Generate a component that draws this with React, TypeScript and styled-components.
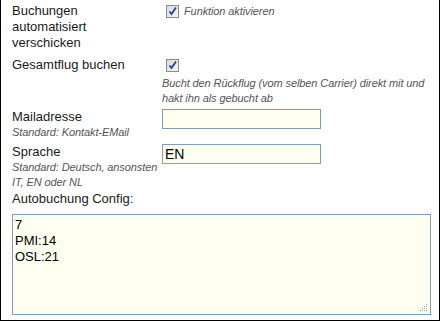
import React from "react";
import styled, { createGlobalStyle } from "styled-components";

const GlobalStyle = createGlobalStyle`
  html, body {
    margin: 0;
    padding: 0;
    background: #fff;
  }
  body {
    font-family: "Liberation Sans", Arial, sans-serif;
  }
`;

const Frame = styled.div`
  box-sizing: border-box;
  width: 440px;
  height: 321px;
  border: 1px solid #000;
  border-top: none;
  padding: 3px 8px 0 11px;
  background: #fff;
  overflow: hidden;
`;

const Row = styled.div<{ $gap?: number }>`
  display: grid;
  grid-template-columns: 150px 1fr;
  margin-bottom: ${(p) => p.$gap ?? 0}px;
`;

const Label = styled.div`
  font-size: 13px;
  line-height: 16px;
  color: #1a1a1a;
`;

const Hint = styled.div<{ $top?: number }>`
  font-size: 11px;
  line-height: 15px;
  font-style: italic;
  letter-spacing: -0.1px;
  color: #555;
  white-space: nowrap;
  margin-top: ${(p) => p.$top ?? 0}px;
`;

const Field = styled.div`
  display: flex;
  flex-direction: column;
`;

const CheckLine = styled.label`
  display: flex;
  align-items: center;
  gap: 5px;
  height: 16px;
  padding-left: 4px;
`;

const Box = styled.span`
  box-sizing: border-box;
  width: 13px;
  height: 13px;
  border: 1px solid #8c8c8c;
  background: linear-gradient(135deg, #d8d8d8, #f6f6f6);
  display: flex;
  align-items: center;
  justify-content: center;
`;

const Input = styled.input`
  box-sizing: border-box;
  width: 159px;
  height: 20px;
  margin: 0;
  padding: 0 2px;
  border: 1px solid #7f9db9;
  background: #fffff0;
  font-family: "Liberation Sans", Arial, sans-serif;
  font-size: 14px;
  color: #000;
  outline: none;
`;

const AreaWrap = styled.div`
  position: relative;
  width: 419px;
  height: 101px;
  margin-top: 7px;
`;

const Area = styled.textarea`
  box-sizing: border-box;
  width: 100%;
  height: 100%;
  margin: 0;
  padding: 2px 2px;
  border: 1px solid #7f9db9;
  background: #fffff0;
  font-family: "Liberation Sans", Arial, sans-serif;
  font-size: 13px;
  line-height: 16px;
  color: #000;
  resize: none;
  outline: none;
  display: block;
`;

const Grip = styled.svg`
  position: absolute;
  right: 3px;
  bottom: 3px;
`;

const Check = () => (
  <Box>
    <svg width="11" height="11" viewBox="0 0 11 11">
      <path d="M2.5 5.5 L4.5 8 L9 1.5" fill="none" stroke="#2a3ea0" strokeWidth="1.8" />
    </svg>
  </Box>
);

export default function App() {
  return (
    <>
      <GlobalStyle />
      <Frame>
        <Row $gap={6}>
          <Label>
            Buchungen
            <br />
            automatisiert
            <br />
            verschicken
          </Label>
          <Field>
            <CheckLine>
              <Check />
              <Hint>Funktion aktivieren</Hint>
            </CheckLine>
          </Field>
        </Row>
        <Row $gap={3}>
          <Label>Gesamtflug buchen</Label>
          <Field>
            <CheckLine>
              <Check />
            </CheckLine>
            <Hint $top={3}>
              Bucht den Rückflug (vom selben Carrier) direkt mit und
              <br />
              hakt ihn als gebucht ab
            </Hint>
          </Field>
        </Row>
        <Row $gap={4}>
          <Field>
            <Label>Mailadresse</Label>
            <Hint>Standard: Kontakt-EMail</Hint>
          </Field>
          <Field>
            <Input defaultValue="" />
          </Field>
        </Row>
        <Row $gap={1}>
          <Field>
            <Label>Sprache</Label>
            <Hint>
              Standard: Deutsch, ansonsten
              <br />
              IT, EN oder NL
            </Hint>
          </Field>
          <Field>
            <Input defaultValue="EN" />
          </Field>
        </Row>
        <Label>Autobuchung Config:</Label>
        <AreaWrap>
          <Area defaultValue={"7\nPMI:14\nOSL:21"} />
          <Grip width="8" height="8" viewBox="0 0 8 8">
            <g fill="#a0a0a0">
              <rect x="6" y="0" width="1" height="1" />
              <rect x="4" y="2" width="1" height="1" />
              <rect x="6" y="2" width="1" height="1" />
              <rect x="2" y="4" width="1" height="1" />
              <rect x="4" y="4" width="1" height="1" />
              <rect x="6" y="4" width="1" height="1" />
              <rect x="0" y="6" width="1" height="1" />
              <rect x="2" y="6" width="1" height="1" />
              <rect x="4" y="6" width="1" height="1" />
              <rect x="6" y="6" width="1" height="1" />
            </g>
          </Grip>
        </AreaWrap>
      </Frame>
    </>
  );
}
